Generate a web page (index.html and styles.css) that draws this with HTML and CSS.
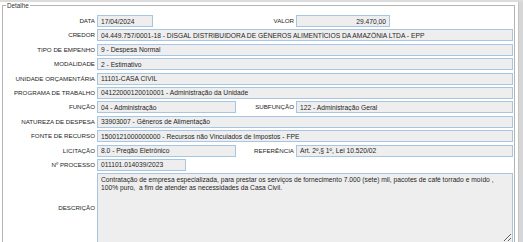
FILE: index.html
```html
<!DOCTYPE html>
<html lang="pt-BR">
<head>
    <meta charset="UTF-8">
    <title>Detalhe do Empenho</title>
    <link rel="stylesheet" href="styles.css">
</head>
<body>
    <div class="top-strip"></div>
    <div class="main">
        <fieldset class="detalhe">
            <legend>Detalhe</legend>
            <div class="form-grid">
                <label>DATA</label>
                <input class="field short" readonly value="17/04/2024">
                <label>VALOR</label>
                <input class="field money" readonly value="29.470,00">

                <label>CREDOR</label>
                <input class="field full" readonly value="04.449.757/0001-18 - DISGAL DISTRIBUIDORA DE GÊNEROS ALIMENTÍCIOS DA AMAZÔNIA LTDA - EPP">

                <label>TIPO DE EMPENHO</label>
                <input class="field full" readonly value="9 - Despesa Normal">

                <label>MODALIDADE</label>
                <input class="field full" readonly value="2 - Estimativo">

                <label>UNIDADE ORÇAMENTÁRIA</label>
                <input class="field full" readonly value="11101-CASA CIVIL">

                <label>PROGRAMA DE TRABALHO</label>
                <input class="field full" readonly value="04122000120010001 - Administração da Unidade">

                <label>FUNÇÃO</label>
                <input class="field" readonly value="04 - Administração">
                <label>SUBFUNÇÃO</label>
                <input class="field" readonly value="122 - Administração Geral">

                <label>NATUREZA DE DESPESA</label>
                <input class="field full" readonly value="33903007 - Gêneros de Alimentação">

                <label>FONTE DE RECURSO</label>
                <input class="field full" readonly value="1500121000000000 - Recursos não Vinculados de Impostos - FPE">

                <label>LICITAÇÃO</label>
                <input class="field" readonly value="8.0 - Pregão Eletrônico">
                <label>REFERÊNCIA</label>
                <input class="field" readonly value="Art. 2º,§ 1º, Lei 10.520/02">

                <label>Nº PROCESSO</label>
                <input class="field processo" readonly value="011101.014039/2023">

                <label class="desc-label">DESCRIÇÃO</label>
                <textarea class="field full desc" readonly>Contratação de empresa especializada, para prestar os serviços de fornecimento 7.000 (sete) mil, pacotes de café torrado e moído , 100% puro,  a fim de atender as necessidades da Casa Civil.</textarea>
            </div>
        </fieldset>
        <div class="side-strip"></div>
    </div>
</body>
</html>
```

FILE: styles.css
```css
* {
    margin: 0;
    padding: 0;
    box-sizing: border-box;
}

body {
    font-family: 'Liberation Sans', Arial, sans-serif;
    font-size: 7px;
    color: #222;
    background: #ffffff;
    overflow: hidden;
}

.top-strip {
    height: 2px;
    background: #dcdcdc;
}

.main {
    display: flex;
}

.detalhe {
    flex: 1;
    margin: 0 3px 0 2px;
    border: 1px solid #b4b4b4;
    padding: 0 0 10px 0;
    min-width: 0;
}

.detalhe legend {
    margin-left: 3px;
    padding: 0 1px;
    font-size: 6.3px;
    color: #333;
    line-height: 7px;
}

.side-strip {
    width: 5px;
    background: #d6d6d6;
    border-left: 1px solid #c4c4c4;
}

.form-grid {
    display: grid;
    grid-template-columns: 92px 139px 56px 217px;
    column-gap: 2px;
    row-gap: 2.4px;
    padding-top: 6px;
    margin-right: 2px;
}

.form-grid label {
    text-align: right;
    align-self: center;
    font-size: 6.2px;
    line-height: 12px;
    color: #1e1e1e;
    white-space: nowrap;
}

.field {
    height: 12px;
    border: 1px solid #a8c6e2;
    background: #eeeeee;
    font-family: 'Liberation Sans', Arial, sans-serif;
    font-size: 6.7px;
    color: #1e1e1e;
    padding: 0 3px;
    outline: none;
    min-width: 0;
}

.field.full {
    grid-column: 2 / 5;
}

.field.short {
    width: 56px;
}

.field.money {
    width: 94px;
    text-align: right;
}

.field.processo {
    width: 89px;
    grid-column: 2 / 5;
}

.desc-label {
    align-self: center;
}

.field.desc {
    height: 70px;
    padding: 2px 3px;
    line-height: 8px;
    resize: both;
    overflow: hidden;
}
```
